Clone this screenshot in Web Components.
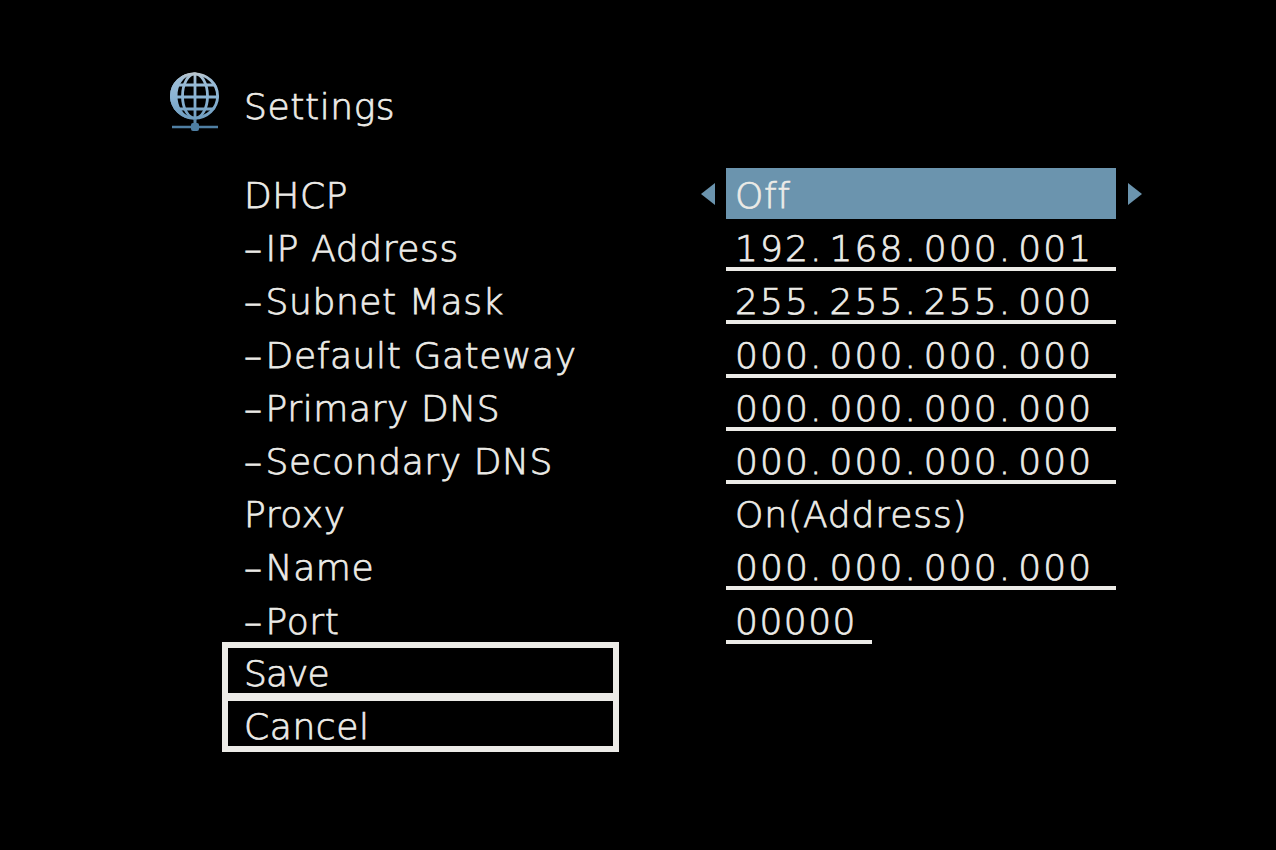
<!DOCTYPE html>
<html>
<head>
<meta charset="utf-8">
<title>Settings</title>
<style>
  html, body { margin: 0; background: #000; }
  body { width: 1276px; height: 850px; overflow: hidden; font-family: "DejaVu Sans", sans-serif; }
</style>
</head>
<body>
<osd-screen>
  <osd-header slot="header">Settings</osd-header>
  <osd-row label="DHCP" value="Off" kind="selected"></osd-row>
  <osd-row label="–IP Address" value="192. 168. 000. 001" kind="field"></osd-row>
  <osd-row label="–Subnet Mask" value="255. 255. 255. 000" kind="field"></osd-row>
  <osd-row label="–Default Gateway" value="000. 000. 000. 000" kind="field"></osd-row>
  <osd-row label="–Primary DNS" value="000. 000. 000. 000" kind="field"></osd-row>
  <osd-row label="–Secondary DNS" value="000. 000. 000. 000" kind="field"></osd-row>
  <osd-row label="Proxy" value="On(Address)" kind="plain"></osd-row>
  <osd-row label="–Name" value="000. 000. 000. 000" kind="field"></osd-row>
  <osd-row label="–Port" value="00000" kind="short"></osd-row>
  <osd-button style="letter-spacing: -0.9px">Save</osd-button>
  <osd-button>Cancel</osd-button>
</osd-screen>

<script>
class OsdScreen extends HTMLElement {
  constructor() {
    super();
    this.attachShadow({ mode: "open" });
    this.shadowRoot.innerHTML = `
      <style>
        :host {
          display: flex;
          flex-direction: column;
          box-sizing: border-box;
          width: 1276px;
          height: 850px;
          padding: 71px 0 0 168px;
          background: #000;
          color: #ecebe7;
          font: 200 36px/53.2px "DejaVu Sans", sans-serif;
          letter-spacing: 0.6px;
          -webkit-text-stroke: 0.75px #ecebe7;
        }
        .rows { display: flex; flex-direction: column; margin-top: 35px; }
      </style>
      <slot name="header"></slot>
      <div class="rows"><slot></slot></div>
    `;
  }
}

class OsdHeader extends HTMLElement {
  constructor() {
    super();
    this.attachShadow({ mode: "open" });
    this.shadowRoot.innerHTML = `
      <style>
        :host { display: flex; align-items: flex-start; gap: 22px; height: 62px; }
        svg { width: 54px; height: 62px; flex: none; }
        span { padding-top: 9px; }
      </style>
      <svg viewBox="0 0 54 62" aria-hidden="true">
        <defs>
          <linearGradient id="globe" gradientUnits="userSpaceOnUse" x1="0" y1="2" x2="0" y2="49">
            <stop offset="0" stop-color="#bcc6cc"/>
            <stop offset=".14" stop-color="#9dbdd6"/>
            <stop offset=".55" stop-color="#88b2d3"/>
            <stop offset="1" stop-color="#6d9bbd"/>
          </linearGradient>
          <clipPath id="ball"><ellipse cx="26.500" cy="25" rx="24.500" ry="23.500"/></clipPath>
        </defs>
        <path d="M26.500 1.500A24.500 23.500 0 0 0 26.500 48.500C14 44 9.500 35 9.500 25S14 6 26.500 1.500Z" fill="url(#globe)"/>
        <g fill="none" stroke="url(#globe)" stroke-width="2.800">
          <ellipse cx="26.500" cy="25" rx="23.100" ry="22.100"/>
          <ellipse cx="27" cy="25" rx="12.500" ry="22.100"/>
          <g clip-path="url(#ball)">
            <path d="M27 0V50M0 14H54M0 26H54M0 38H54"/>
          </g>
        </g>
        <path d="M27 48V54" stroke="#5d8aac" stroke-width="3"/>
        <path d="M4 56H50" stroke="#4f7fa3" stroke-width="2.500"/>
        <rect x="23" y="52" width="8" height="8" rx="2" fill="#4f7fa3"/>
      </svg>
      <span><slot></slot></span>
    `;
  }
}

class OsdRow extends HTMLElement {
  constructor() {
    super();
    this.attachShadow({ mode: "open" });
  }

  connectedCallback() {
    const label = this.getAttribute("label") || "";
    const value = this.getAttribute("value") || "";
    const kind = this.getAttribute("kind") || "plain";
    // the OSD draws its leading dash wider than an en dash
    const labelHtml = label.replace(/^–/, '<span class="dash">–</span>');
    this.shadowRoot.innerHTML = `
      <style>
        :host {
          display: grid;
          grid-template-columns: 482px 390px;
          height: 53.2px;
          line-height: 56px;
          padding-left: 76px;
          white-space: pre;
        }
        .dash { margin-right: 3px; }
        .value {
          box-sizing: border-box;
          position: relative;
          padding-left: 9px;
          height: 51px;
        }
        .plain { letter-spacing: 0.9px; }
        .field, .short {
          border-bottom: 4px solid #ecebe7;
          height: 50px;
          letter-spacing: 2.1px;
          word-spacing: -7.700px;
        }
        .short { width: 146px; letter-spacing: 1.5px; }
        .selected { background: #6b94ae; }
        .arrow {
          position: absolute;
          top: 15px;
          width: 0;
          height: 0;
          border-top: 11px solid transparent;
          border-bottom: 11px solid transparent;
        }
        .arrow.left { left: -25px; border-right: 14px solid #6b94ae; }
        .arrow.right { right: -26px; border-left: 14px solid #6b94ae; }
      </style>
      <div>${labelHtml}</div>
      <div class="value ${kind}">${value}${
        kind === "selected"
          ? '<i class="arrow left"></i><i class="arrow right"></i>'
          : ""
      }</div>
    `;
  }
}

class OsdButton extends HTMLElement {
  constructor() {
    super();
    this.attachShadow({ mode: "open" });
    this.shadowRoot.innerHTML = `
      <style>
        :host {
          display: block;
          box-sizing: border-box;
          width: 397px;
          height: 57px;
          margin: 0 0 -4px 54px;
          padding-left: 16px;
          border: 6px solid #ecebe7;
          line-height: 51px;
        }
        :host(:first-of-type) { margin-top: -5px; }
      </style>
      <slot></slot>
    `;
  }
}

customElements.define("osd-screen", OsdScreen);
customElements.define("osd-header", OsdHeader);
customElements.define("osd-row", OsdRow);
customElements.define("osd-button", OsdButton);
</script>
</body>
</html>
